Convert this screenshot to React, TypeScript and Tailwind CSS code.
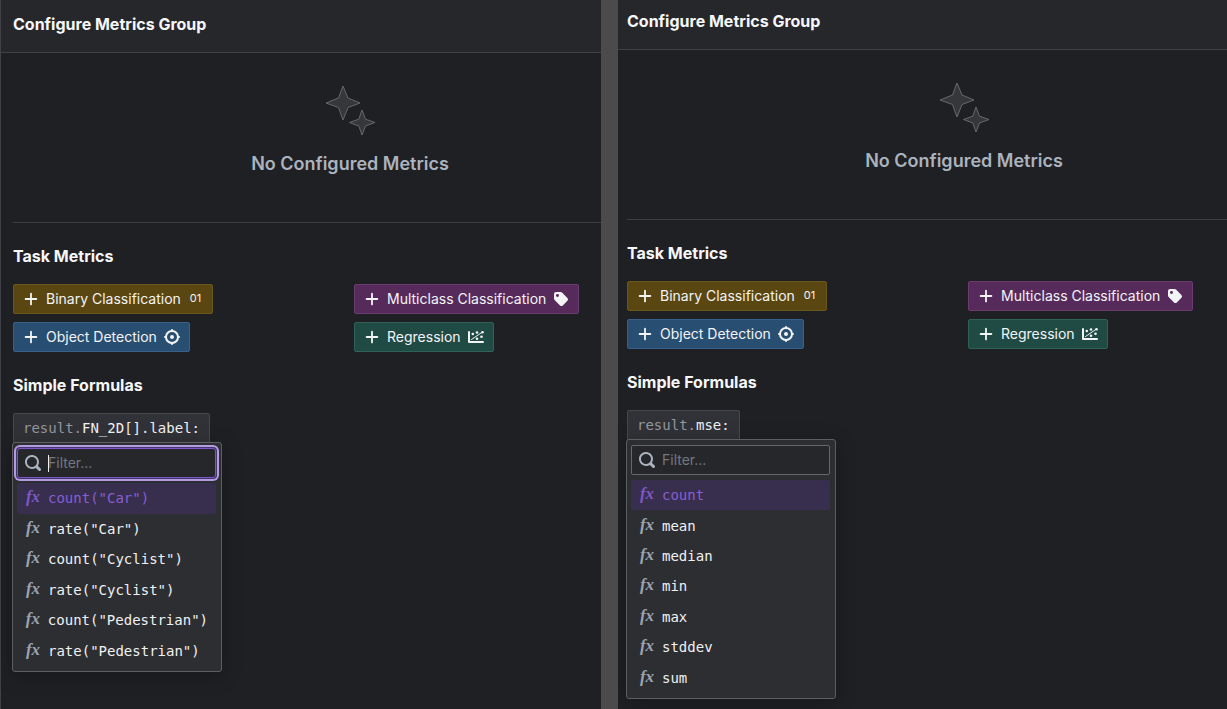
import React from "react";

function PlusIcon() {
  return (
    <svg viewBox="0 0 16 16" className="size-4 shrink-0" fill="currentColor" aria-hidden="true">
      <path d="M13.4 7.1H8.9V2.6c0-.5-.4-.9-.9-.9s-.9.4-.9.9v4.500H2.600c-.5 0-.9.4-.9.9s.4.9.9.9h4.500v4.500c0 .5.4.9.9.9s.9-.4.9-.9V8.900h4.500c.5 0 .9-.4.9-.9s-.4-.9-.9-.9z" />
    </svg>
  );
}

function SearchIcon() {
  return (
    <svg viewBox="0 0 16 16" className="size-4 shrink-0 text-[#abb3bf]" fill="currentColor" aria-hidden="true">
      <path d="M15.55 13.43l-2.67-2.68a6.94 6.94 0 001.11-3.760c0-3.870-3.130-7-7-7s-7 3.130-7 7 3.130 7 7 7c1.390 0 2.680-.42 3.760-1.110l2.680 2.670a1.498 1.498 0 102.120-2.120zm-8.560-1.440c-2.760 0-5-2.240-5-5s2.240-5 5-5 5 2.240 5 5-2.240 5-5 5z" />
    </svg>
  );
}

function TagIcon() {
  return (
    <svg viewBox="0 0 16 16" className="size-4 shrink-0" fill="currentColor" fillRule="evenodd" aria-hidden="true">
      <path d="M1 3a2 2 0 012-2h4.584a2 2 0 011.414.586l5.413 5.412a2 2 0 010 2.829l-4.584 4.584a2 2 0 01-2.829 0L1.586 8.998A2 2 0 011 7.584V3zm3.487-.007a1.495 1.495 0 100 2.990 1.495 1.495 0 000-2.990z" />
    </svg>
  );
}

function TargetIcon() {
  return (
    <svg viewBox="0 0 16 16" className="size-4 shrink-0" fill="none" stroke="currentColor" strokeWidth="2" strokeLinecap="round" aria-hidden="true">
      <circle cx="8" cy="8" r="6" />
      <circle cx="8" cy="8" r="2" fill="currentColor" stroke="none" />
      <path d="M8 1v1M8 14v1M1 8h1M14 8h1" />
    </svg>
  );
}

function RegressionIcon() {
  return (
    <svg viewBox="0 0 16 16" className="size-4 shrink-0" fill="none" stroke="currentColor" strokeLinecap="round" strokeLinejoin="round" aria-hidden="true">
      <path d="M1 3v10h14" strokeWidth="2" />
      <path d="M3.500 10.500L14.500 3" strokeWidth="1" />
      <g fill="currentColor" stroke="none">
        <circle cx="4.800" cy="5" r="1.300" />
        <circle cx="9" cy="3.500" r="1.300" />
        <circle cx="14.500" cy="3.300" r="1.300" />
        <circle cx="9" cy="9.700" r="1.300" />
        <circle cx="13.500" cy="7.700" r="1.300" />
      </g>
    </svg>
  );
}

function SparkleIcon() {
  return (
    <svg viewBox="0 0 52 52" className="size-[52px]" fill="#36373b" stroke="#66686d" strokeWidth="1" aria-hidden="true">
      <path d="M19 2L24 14L36 19L24 23.500L19 36L14.500 23.500L2 19L14.500 14Z" />
      <path d="M38 26L41.500 35.200L51 38.500L41.500 42L38 51L34.800 42L25.500 38.500L34.800 35.200Z" />
    </svg>
  );
}

function MetricButton({ label, color, children }: { label: string; color: string; children: React.ReactNode }) {
  return (
    <button type="button" className={`flex h-[30px] items-center gap-[7px] justify-self-start rounded-[2px] border px-[9px] text-sm whitespace-nowrap text-[#f3f4f6] ${color}`}>
      <PlusIcon />
      <span>{label}</span>
      {children}
    </button>
  );
}

type PanelProps = {
  field: string;
  formulas: string[];
  focused?: boolean;
  header: string;
  edge: string;
  menu: string;
};

function Panel({ field, formulas, focused, header, edge, menu }: PanelProps) {
  return (
    <section className="min-w-0 overflow-hidden bg-[#1f2024]">
      <header className={`flex items-center border-b border-[#404148] bg-[#26272b] ${header} ${edge}`}>
        <h2 className="text-base font-bold text-[#f6f7f9]">Configure Metrics Group</h2>
      </header>
      <div className={`min-h-full ${edge}`}>
        <div className="w-[674px]">
          <div className="flex h-[170px] flex-col items-center border-b border-[#3e3f44] pt-[31px]">
            <SparkleIcon />
            <p className="mt-4 text-lg leading-6 font-semibold text-[#abb3bf]">No Configured Metrics</p>
          </div>
          <h3 className="mt-[21px] text-base leading-6 font-bold text-[#f6f7f9]">Task Metrics</h3>
          <div className="mt-4 grid grid-cols-2 gap-2">
            <MetricButton label="Binary Classification" color="border-[#6b561b] bg-[#5a4611]">
              <span className="px-[2px] text-[11px]">01</span>
            </MetricButton>
            <MetricButton label="Multiclass Classification" color="border-[#6c3c70] bg-[#562b5b]">
              <TagIcon />
            </MetricButton>
            <MetricButton label="Object Detection" color="border-[#38618a] bg-[#284e72]">
              <TargetIcon />
            </MetricButton>
            <MetricButton label="Regression" color="border-[#30625a] bg-[#204b45]">
              <RegressionIcon />
            </MetricButton>
          </div>
          <h3 className="mt-[21px] text-base leading-6 font-bold text-[#f6f7f9]">Simple Formulas</h3>
          <div className="relative mt-4">
            <button type="button" className="flex h-[30px] items-center rounded-t-[2px] border border-[#47484d] bg-[#313237] px-[9px] font-['DejaVu_Sans_Mono',monospace] text-sm whitespace-nowrap">
              <span className="text-[#94979e]">result.</span>
              <span className="text-[#f0f1f3]">{field}:</span>
            </button>
            <div className={`absolute top-[29px] -left-px flex w-[210px] flex-col rounded-[3px] border border-[#5c5e62] bg-[#2d2e32] py-[5px] pr-[5px] pl-1 shadow-[0_4px_20px_rgba(0,0,0,0.25)] ${menu}`}>
              <label
                className={`relative mb-[5px] flex h-[30px] shrink-0 items-center gap-[7px] border bg-[#26272b] px-[7px] ${
                  focused ? "rounded-[3px] border-[#7c55c7] ring-2 ring-[#b29be0] ring-offset-1 ring-offset-[#43346a]" : "rounded-[2px] border-[#66686d]"
                }`}
              >
                <SearchIcon />
                <input type="text" aria-label="Filter formulas" placeholder="Filter..." className="h-5 w-full min-w-0 bg-transparent text-sm text-[#f0f1f3] outline-none placeholder:text-[#74777e]" />
                {focused && <span className="absolute left-[30px] h-[17px] w-px bg-[#f0f1f3]" />}
              </label>
              <ul className="flex flex-1 flex-col font-['DejaVu_Sans_Mono',monospace] text-sm">
                {formulas.map((formula, index) => (
                  <li key={formula} className="flex flex-1">
                    <button
                      type="button"
                      className={`flex w-full items-center gap-[7px] rounded-[2px] px-2 whitespace-nowrap ${
                        index === 0 ? "bg-[#382e4e] text-[#875fd3]" : "text-[#f0f1f3]"
                      }`}
                    >
                      <span className={`w-4 pb-[2px] font-['Liberation_Serif',serif] text-[17px] leading-5 font-bold italic ${index === 0 ? "text-[#7d58c4]" : "text-[#9ca3af]"}`}>fx</span>
                      <span>{formula}</span>
                    </button>
                  </li>
                ))}
              </ul>
            </div>
          </div>
        </div>
      </div>
    </section>
  );
}

export default function App() {
  return (
    <main className="grid min-h-screen grid-cols-[601fr_17px_609fr] overflow-hidden bg-[#4c4a4a] font-[Inter,sans-serif]">
      <Panel
        field="FN_2D[].label"
        formulas={['count("Car")', 'rate("Car")', 'count("Cyclist")', 'rate("Cyclist")', 'count("Pedestrian")', 'rate("Pedestrian")']}
        focused
        header="h-[53px] pb-1"
        edge="border-l border-l-[#404148] pl-3"
        menu="min-h-[230px]"
      />
      <div />
      <Panel
        field="mse"
        formulas={["count", "mean", "median", "min", "max", "stddev", "sum"]}
        header="h-[50px] pb-2"
        edge="pl-[9px]"
        menu="min-h-[260px]"
      />
    </main>
  );
}
